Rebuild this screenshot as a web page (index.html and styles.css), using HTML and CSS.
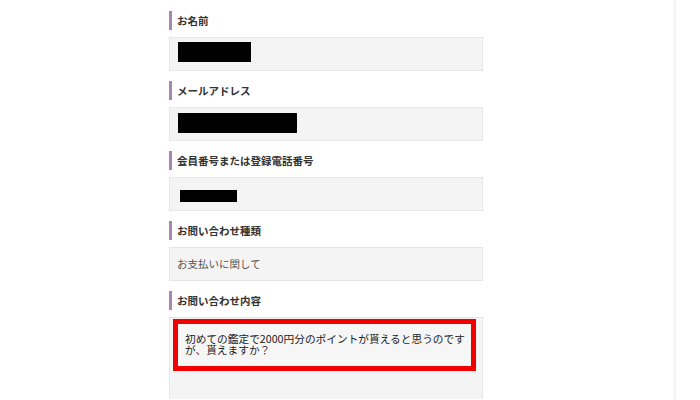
FILE: index.html
```html
<!DOCTYPE html>
<html lang="ja">
<head>
<meta charset="utf-8">
<link rel="stylesheet" href="styles.css">
</head>
<body>
<div class="page">
  <div class="form">
    <div class="field">
      <div class="label">お名前</div>
      <div class="input"><span class="redact r1"></span></div>
    </div>
    <div class="field">
      <div class="label">メールアドレス</div>
      <div class="input"><span class="redact r2"></span></div>
    </div>
    <div class="field">
      <div class="label">会員番号または登録電話番号</div>
      <div class="input"><span class="redact r3"></span></div>
    </div>
    <div class="field">
      <div class="label">お問い合わせ種類</div>
      <div class="input select">お支払いに関して</div>
    </div>
    <div class="field">
      <div class="label">お問い合わせ内容</div>
      <div class="textarea">
        <div class="highlight">初めての鑑定で2000円分のポイントが貰えると思うのですが、貰えますか？</div>
      </div>
    </div>
  </div>
  <div class="edge"></div>
</div>
</body>
</html>
```

FILE: styles.css
```css
html, body {
  margin: 0;
  padding: 0;
  background: #ffffff;
}
body {
  font-family: "Noto Sans CJK JP", "Noto Sans", sans-serif;
  color: #333333;
  width: 700px;
  height: 400px;
  overflow: hidden;
}
.page {
  display: flex;
  height: 400px;
}
.form {
  margin-left: 169px;
  width: 314px;
  padding-top: 11px;
  display: flex;
  flex-direction: column;
  gap: 10px;
}
.field {
  display: flex;
  flex-direction: column;
  gap: 7px;
}
.label {
  border-left: 3px solid #a985b3;
  padding-left: 5px;
  height: 19px;
  line-height: 19px;
  font-size: 10.5px;
  font-weight: 600;
  color: #333333;
}
.input {
  box-sizing: border-box;
  height: 34px;
  background: #f4f4f4;
  border: 1px solid #e6e6e6;
  padding: 4px 0 0 8px;
}
.redact {
  display: block;
  background: #000000;
}
.r1 { width: 73px; height: 20px; }
.r2 { width: 119px; height: 20px; margin-top: 1px; }
.r3 { width: 57px; height: 12px; margin-top: 8px; margin-left: 2px; }
.select {
  padding: 0 0 0 7px;
  line-height: 32px;
  font-size: 10.5px;
  color: #555555;
}
.textarea {
  box-sizing: border-box;
  height: 82px;
  background: #f4f4f4;
  border: 1px solid #e6e6e6;
  border-bottom: none;
  padding: 1px 6px 0 3px;
}
.highlight {
  border: 5px solid #f00000;
  background: #f6f6f6;
  height: 33px;
  padding: 9px 2px 0 7px;
  font-size: 10.7px;
  line-height: 11px;
  color: #222222;
}
.edge {
  margin-left: 190px;
  width: 3px;
  height: 400px;
  background: #f6f6f8;
}
```
